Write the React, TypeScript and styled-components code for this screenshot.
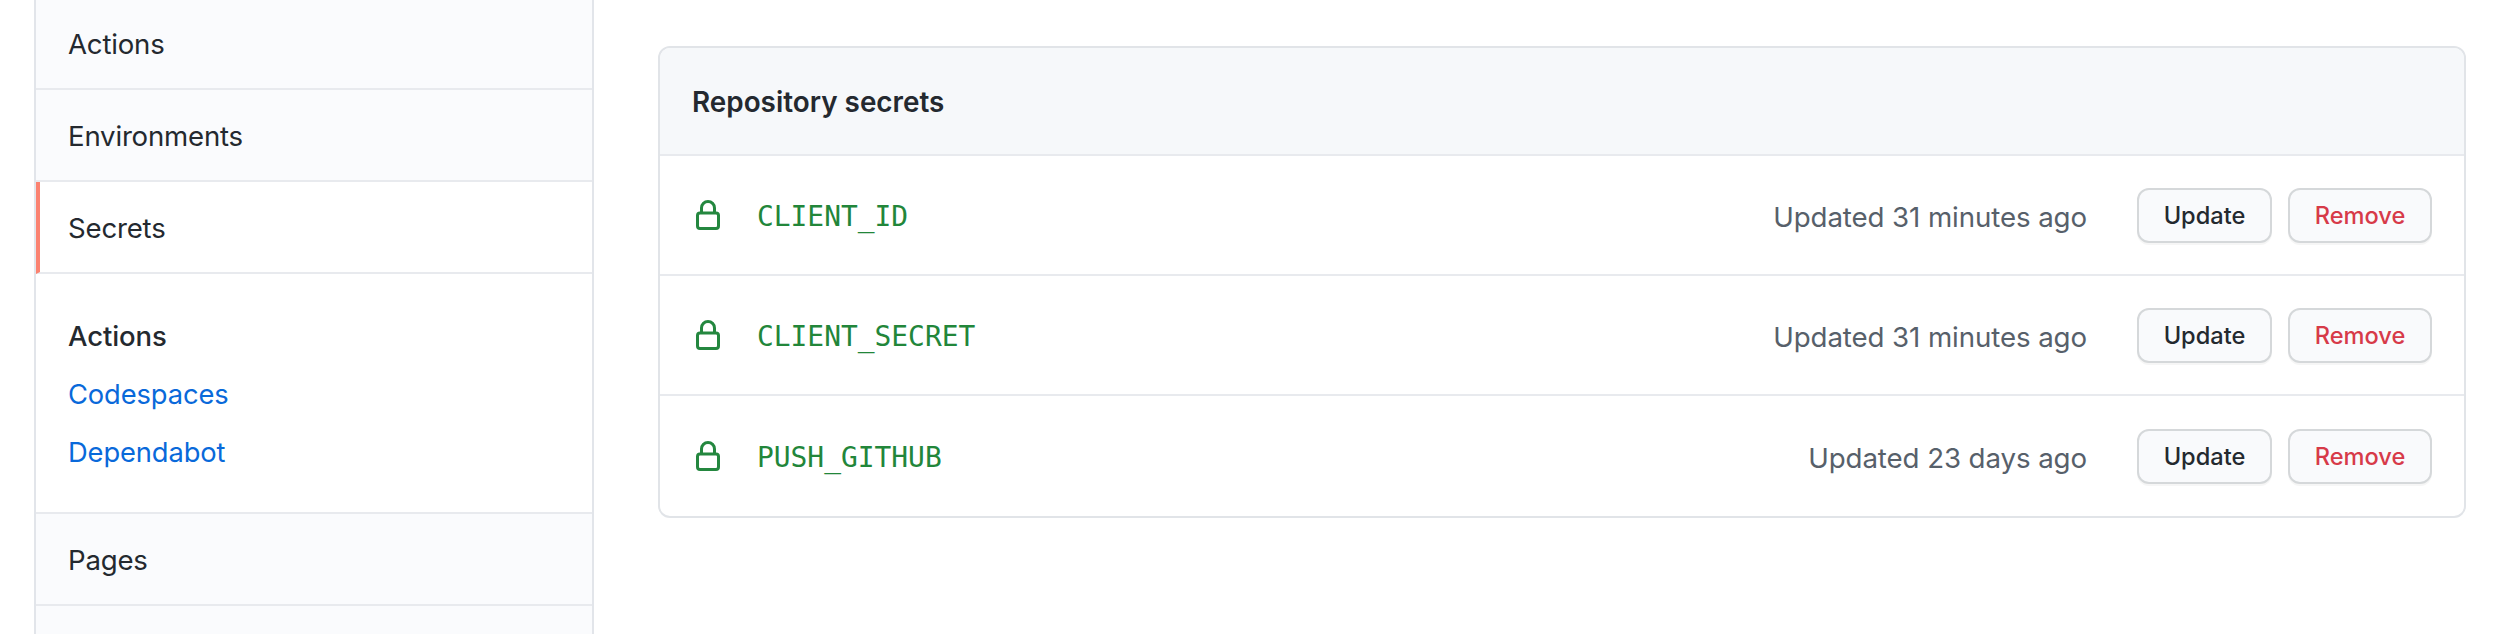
import React from "react";
import styled, { createGlobalStyle } from "styled-components";

const Global = createGlobalStyle`
  html, body { margin: 0; padding: 0; background: #fff; }
  body { font-family: Inter, "Liberation Sans", sans-serif; color: #24292f; }
`;

const Page = styled.div`
  width: 2498px;
  height: 634px;
  overflow: hidden;
  display: flex;
  align-items: flex-start;
  padding-left: 34px;
  box-sizing: border-box;
`;

const Sidebar = styled.nav`
  width: 560px;
  height: 700px;
  margin-top: -2px;
  flex: none;
  box-sizing: border-box;
  border-left: 2px solid #e2e5ea;
  border-right: 2px solid #e2e5ea;
  display: flex;
  flex-direction: column;
`;

const NavRow = styled.div<{ $active?: boolean }>`
  height: 92px;
  flex: none;
  box-sizing: border-box;
  display: flex;
  align-items: center;
  padding: 2px 0 0 ${(p) => (p.$active ? "28px" : "32px")};
  background: ${(p) => (p.$active ? "#fff" : "#fafbfd")};
  border-left: ${(p) => (p.$active ? "4px solid #fb8270" : "none")};
  border-bottom: 2px solid #e8eaee;
  font-size: 27.6px;
  letter-spacing: -0.2px;
  color: #24292f;
`;

const SubGroup = styled.div`
  height: 240px;
  flex: none;
  box-sizing: border-box;
  padding: 33px 0 0 32px;
  background: #fff;
  border-bottom: 2px solid #e8eaee;
  display: flex;
  flex-direction: column;
`;

const SubHeading = styled.div`
  height: 58px;
  display: flex;
  align-items: center;
  font-size: 27.5px;
  font-weight: 500;
  letter-spacing: -0.1px;
  color: #24292f;
`;

const SubLink = styled.a`
  height: 58px;
  display: flex;
  align-items: center;
  font-size: 27.3px;
  letter-spacing: -0.1px;
  color: #0969da;
`;

const Filler = styled.div`
  flex: 1;
  background: #fafbfd;
`;

const Panel = styled.section`
  width: 1808px;
  height: 472px;
  margin: 46px 0 0 64px;
  flex: none;
  box-sizing: border-box;
  border: 2px solid #e1e4e8;
  border-radius: 12px;
  overflow: hidden;
  display: flex;
  flex-direction: column;
`;

const PanelHeader = styled.header`
  height: 108px;
  flex: none;
  box-sizing: border-box;
  background: #f6f8fa;
  border-bottom: 2px solid #e8eaee;
  display: flex;
  align-items: center;
  padding: 2px 0 0 32px;
  font-size: 27.85px;
  font-weight: 600;
  color: #24292f;
`;

const SecretRow = styled.div`
  height: 120px;
  flex: none;
  box-sizing: border-box;
  display: flex;
  align-items: center;
  padding: 0 32px 0 36px;
  border-bottom: 2px solid #e8eaee;
  &:last-child { border-bottom: none; }
`;

const Lock = styled.svg`
  width: 24px;
  height: 30px;
  flex: none;
`;

const SecretName = styled.code`
  margin: 2px 0 0 37px;
  font-family: "DejaVu Sans Mono", "Liberation Mono", monospace;
  font-size: 27.9px;
  color: #22863a;
`;

const Updated = styled.span`
  margin-left: auto;
  margin-top: 4px;
  font-size: 27.7px;
  letter-spacing: -0.1px;
  color: #57606a;
`;

const Actions = styled.div`
  display: flex;
  gap: 16px;
  margin-left: 50px;
  margin-top: 1px;
`;

const Button = styled.button<{ $danger?: boolean }>`
  height: 55px;
  width: ${(p) => (p.$danger ? "144px" : "135px")};
  box-sizing: border-box;
  padding: 0;
  border: 2px solid #d5d8da;
  border-radius: 12px;
  background: #f9fafc;
  box-shadow: 0 2px 0 rgba(27, 31, 36, 0.04);
  font-family: inherit;
  font-size: 23.6px;
  font-weight: 500;
  color: ${(p) => (p.$danger ? "#d73a49" : "#24292f")};
`;

const LockIcon = () => (
  <Lock viewBox="0 0 24 30" fill="none" stroke="#24873f" strokeWidth="3">
    <path d="M5.5 13.5V8a6.5 6.5 0 0 1 13 0v5.5" />
    <rect x="1.5" y="13" width="21" height="15.5" rx="2.5" />
  </Lock>
);

const secrets = [
  { name: "CLIENT_ID", updated: "Updated 31 minutes ago" },
  { name: "CLIENT_SECRET", updated: "Updated 31 minutes ago" },
  { name: "PUSH_GITHUB", updated: "Updated 23 days ago" },
];

export default function App() {
  return (
    <>
      <Global />
      <Page>
        <Sidebar>
          <NavRow>Actions</NavRow>
          <NavRow>Environments</NavRow>
          <NavRow $active>Secrets</NavRow>
          <SubGroup>
            <SubHeading>Actions</SubHeading>
            <SubLink>Codespaces</SubLink>
            <SubLink>Dependabot</SubLink>
          </SubGroup>
          <NavRow>Pages</NavRow>
          <Filler />
        </Sidebar>
        <Panel>
          <PanelHeader>Repository secrets</PanelHeader>
          {secrets.map((s) => (
            <SecretRow key={s.name}>
              <LockIcon />
              <SecretName>{s.name}</SecretName>
              <Updated>{s.updated}</Updated>
              <Actions>
                <Button>Update</Button>
                <Button $danger>Remove</Button>
              </Actions>
            </SecretRow>
          ))}
        </Panel>
      </Page>
    </>
  );
}
